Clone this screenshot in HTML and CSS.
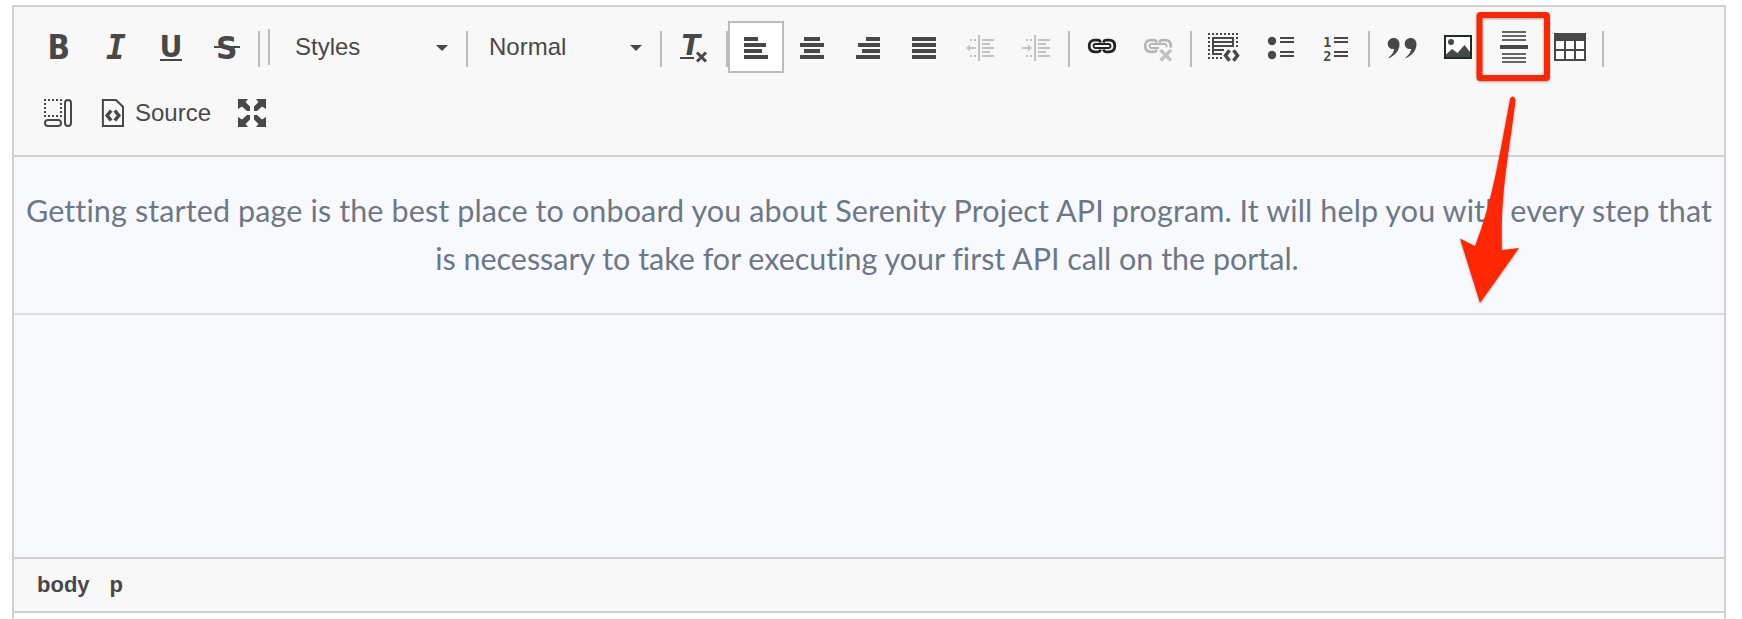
FILE: index.html
```html
<!DOCTYPE html>
<html lang="en">
<head>
<meta charset="utf-8">
<title>Editor</title>
<link rel="stylesheet" href="styles.css">
</head>
<body>
<main class="editor">
  <div class="toolbar">
    <div class="row">
      <button class="btn" aria-label="Bold"><svg class="ico" viewBox="0 0 32 32"><text class="bold" x="3.500" y="28" font-size="33" textLength="22.500" lengthAdjust="spacingAndGlyphs">B</text></svg></button>
      <button class="btn" aria-label="Italic"><svg class="ico" viewBox="0 0 32 32"><text class="mono" x="6" y="28" font-size="33">I</text></svg></button>
      <button class="btn" aria-label="Underline"><svg class="ico" viewBox="0 0 32 32"><text class="bold" x="3.500" y="25.500" font-size="30" textLength="23" lengthAdjust="spacingAndGlyphs">U</text><path d="M4 28h22v2H4z"/></svg></button>
      <button class="btn" aria-label="Strikethrough"><svg class="ico" viewBox="0 0 32 32"><text class="bold" x="4" y="27.500" font-size="32" textLength="21.500" lengthAdjust="spacingAndGlyphs">S</text><path d="M2 15h26v2H2z"/></svg></button>
      <i class="sep after-style"></i><i class="sep raised"></i>
      <button class="combo styles"><span>Styles</span><i class="caret"></i></button>
      <i class="sep"></i>
      <button class="combo format"><span>Normal</span><i class="caret"></i></button>
      <i class="sep"></i>
      <button class="btn clear" aria-label="Remove format"><svg class="ico" viewBox="0 0 32 32"><text class="oblique" x="5.500" y="24" font-size="27.500">T</text><path d="M4 26h14v2H4z"/><path d="M21 21.500l9 9m0-9l-9 9" class="line heavy"/></svg></button>
      <i class="sep"></i>
      <button class="btn on" aria-label="Align left"><svg class="ico" viewBox="0 0 32 32"><path d="M4 6h14v4H4zM4 12h22v4H4zM4 18h18v4H4zM4 24h24v4H4z"/></svg></button>
      <button class="btn" aria-label="Center"><svg class="ico" viewBox="0 0 32 32"><path d="M8 6h16v4H8zM4 12h24v4H4zM8 18h16v4H8zM4 24h24v4H4z"/></svg></button>
      <button class="btn" aria-label="Align right"><svg class="ico" viewBox="0 0 32 32"><path d="M14 6h14v4H14zM6 12h22v4H6zM10 18h18v4H10zM4 24h24v4H4z"/></svg></button>
      <button class="btn" aria-label="Justify"><svg class="ico" viewBox="0 0 32 32"><path d="M4 6h24v4H4zM4 12h24v4H4zM4 18h24v4H4zM4 24h24v4H4z"/></svg></button>
      <button class="btn off" aria-label="Decrease indent"><svg class="ico" viewBox="0 0 32 32"><path d="M14 4h2v26h-2zM18 8h12v2H18zM18 12h8v2h-8zM18 16h12v2H18zM18 20h8v2h-8zM18 24h12v2H18zM6 8h2v2H6zM10 8h2v2h-2zM6 24h2v2H6zM10 24h2v2h-2zM2 17l4-3.500V16h6v2H6v2.500z"/></svg></button>
      <button class="btn off" aria-label="Increase indent"><svg class="ico" viewBox="0 0 32 32"><path d="M14 4h2v26h-2zM18 8h12v2H18zM18 12h8v2h-8zM18 16h12v2H18zM18 20h8v2h-8zM18 24h12v2H18zM6 8h2v2H6zM10 8h2v2h-2zM6 24h2v2H6zM10 24h2v2h-2zM12 17l-4-3.500V16H2v2h6v2.500z"/></svg></button>
      <i class="sep gap"></i>
      <button class="btn" aria-label="Link"><svg class="ico" viewBox="0 0 32 32"><path class="chain" d="M14.500 11.500Q14 9.200 11.500 9.200H9Q3.200 9.200 3.200 15T9 20.800h2.500q2.500 0 3-2.300M17.500 11.500Q18 9.200 20.500 9.200H23q5.800 0 5.800 5.800T23 20.800h-2.500q-2.500 0-3-2.300"/><rect class="bar" x="7.500" y="13" width="17" height="4" rx="2"/></svg></button>
      <button class="btn off" aria-label="Unlink"><svg class="ico" viewBox="0 0 32 32"><path class="chain" d="M14.500 11.500Q14 9.200 11.500 9.200H9Q3.200 9.200 3.200 15T9 20.800h2.500q2.500 0 3-2.300M17.500 11.500Q18 9.200 20.500 9.200H23q5.800 0 5.800 5.800v1.500"/><path class="bar" d="M17 17H9.500q-2 0-2-2t2-2h13q2 0 2 2v1.500"/><path d="M18.500 19l10.500 10.500m0-10.500L18.500 29.500" class="line cross"/></svg></button>
      <i class="sep gap"></i>
      <button class="btn" aria-label="Templates"><svg class="ico" viewBox="0 0 32 32"><path class="line dots" d="M0 3h30M0 27h14M1 6v20M29 6v10"/><path d="M4 6h22v2H4zM4 10h22v2H4zM4 14h22v2H4zM4 18h12v2H4zM4 22h10v2H4zM4 6h2v18H4zM24 6h2v10h-2z"/><path class="line angle" d="M21.500 19.300L17.500 24.500l4 5.200M25.500 19.300l4 5.200-4 5.200"/></svg></button>
      <button class="btn" aria-label="Bulleted list"><svg class="ico" viewBox="0 0 32 32"><circle cx="8" cy="10" r="4.200"/><circle cx="8" cy="24" r="4.200"/><path d="M16 6h14v2H16zM16 10h14v2H16zM16 20h14v2H16zM16 24h14v2H16z"/></svg></button>
      <button class="btn" aria-label="Numbered list"><svg class="ico" viewBox="0 0 32 32"><text class="num" x="3.200" y="16" font-size="13.500">1</text><text class="num" x="3.200" y="30" font-size="13.500">2</text><path d="M14 6h14v2H14zM14 10h14v2H14zM14 20h14v2H14zM14 24h14v2H14z"/></svg></button>
      <i class="sep gap"></i>
      <button class="btn" aria-label="Quote"><svg class="ico" viewBox="0 0 32 32"><path d="M7.700 7c3.500 0 5.800 2.600 5.800 6.300 0 6-4.300 11.500-11 14v-.8c3-2.100 5.200-4.900 5.700-8.500-3.800.5-6.500-1.800-6.500-5.200C1.700 9.500 4.300 7 7.700 7zM24.700 7c3.500 0 5.800 2.600 5.800 6.300 0 6-4.300 11.500-11 14v-.8c3-2.100 5.200-4.900 5.700-8.500-3.800.5-6.500-1.800-6.500-5.200C18.700 9.500 21.300 7 24.700 7z"/></svg></button>
      <button class="btn" aria-label="Image"><svg class="ico" viewBox="0 0 32 32"><path class="dark" d="M2 4h28v24H2z"/><path class="white" d="M4 6h24v20H4z"/><circle cx="9" cy="11" r="3"/><path d="M4 26v-2.500L10 18l5.500 4 7-8L28 21v5z"/></svg></button>
      <button class="btn" aria-label="Horizontal line"><svg class="ico" viewBox="0 0 32 32"><path class="mid" d="M4 0h24v2H4zM4 4h24v2H4zM4 8h24v2H4zM4 22h24v2H4zM4 26h24v2H4zM4 30h24v2H4z"/><path d="M2 14h28v4H2z"/></svg></button>
      <button class="btn" aria-label="Table"><svg class="ico" viewBox="0 0 32 32"><path d="M0 2h32v28H0z"/><path class="white" d="M2 10h8v8H2zM12 10h8v8h-8zM22 10h8v8h-8zM2 20h8v8H2zM12 20h8v8h-8zM22 20h8v8h-8z"/></svg></button>
      <i class="sep gap"></i>
    </div>
    <div class="row second">
      <button class="btn" aria-label="Show blocks"><svg class="ico" viewBox="0 0 32 32"><path class="line dots" d="M2 3h18M2 19h18M3 6v12M19 6v12"/><rect class="line" x="3" y="23" width="16" height="6" rx="3"/><rect class="line" x="23" y="3" width="6" height="26" rx="3"/></svg></button>
      <button class="source"><svg class="ico" viewBox="0 0 32 32"><path class="line" d="M6.900 3h13L27 9.800V29H6.900z"/><path class="line angle" d="M15.200 13.500l-4 5 4 5M18.800 13.500l4 5-4 5"/></svg><span>Source</span></button>
      <button class="btn" aria-label="Maximize"><svg class="ico" viewBox="0 0 32 32"><path d="M2 2h10L9.500 5 14 9.500V14H11L6 9.500 2 12zM30 2v10l-4-2.500L21 14h-3V9.500L22.500 5 20 2zM2 30V20l4 2.500L11 18h3v4.500L9.500 27l2.500 3zM30 30H20l2.500-3L18 22.500V18h3l5 4.500 4-2.500z"/></svg></button>
    </div>
  </div>
  <section class="content">
    <p class="intro"><span class="l1">Getting started page is the best place to onboard you about Serenity Project API program. It will help you with every step that</span><br><span class="l2">is necessary to take for executing your first API call on the portal.</span></p>
    <hr class="rule">
  </section>
  <footer class="path"><span>body</span><span>p</span></footer>
</main>
<svg class="callout" viewBox="0 0 110 310">
  <rect x="19.500" y="15" width="67.500" height="63" rx="1" />
  <path d="M50 99Q51 96 53 96.500T55.500 100C51 142 40 190 42 250L59 248 20 303 0 238.500 15 246C33 200 40 152 50 99z"/>
</svg>
</body>
</html>
```
FILE: styles.css
```css
* { box-sizing: border-box; }
body { margin: 0; height: 619px; overflow: hidden; background: #fff; font-family: "Liberation Sans", Arial, sans-serif; }
.editor { width: 1714px; height: 640px; margin: 5px 0 0 12px; border: 2px solid #d1d1d1; }
.toolbar { height: 150px; padding: 14px 0 0 18px; background: #f8f8f8; border-bottom: 2px solid #d1d1d1; }
.row { display: flex; height: 52px; align-items: center; }
.second { margin: 14px 0 0 -2px; }
button { font: 24px "Liberation Sans", Arial, sans-serif; color: #484848; background: none; border: 0; padding: 0; margin: 0; }
.btn { width: 56px; height: 52px; flex: none; display: flex; align-items: center; justify-content: center; }
.on { background: #fff; border: 2px solid #bcbcbc; }
.off { opacity: .3; }
.ico { width: 32px; height: 32px; flex: none; overflow: visible; fill: #484848; }
.sep { flex: none; width: 2px; height: 36px; margin-top: 4px; background: #bcbcbc; }
.after-style { margin-left: 2px; }
.raised { margin: 0 0 0 8px; }
.gap { margin-left: 4px; margin-right: 4px; }
.combo { height: 52px; display: flex; align-items: center; justify-content: space-between; }
.styles { width: 196px; padding: 0 18px 0 25px; }
.format { width: 192px; padding: 0 18px 0 21px; }
.caret { border: 6px solid transparent; border-top-color: #484848; border-bottom: 0; margin-top: 2px; }
.clear { margin: 0 6px 0 2px; }
.source { height: 52px; display: flex; align-items: center; gap: 7px; padding: 0 13px 0 10px; width: 138px; }
.bold { font-family: "DejaVu Sans", sans-serif; font-weight: 700; }
.mono { font-family: "DejaVu Sans Mono", monospace; font-weight: 700; font-style: italic; }
.oblique { font-family: "DejaVu Sans", sans-serif; font-weight: 700; font-style: italic; }
.num { font-family: "DejaVu Sans Mono", monospace; font-weight: 700; }
.line { fill: none; stroke: #484848; stroke-width: 2; }
.heavy { stroke-width: 3; }
.cross { stroke-width: 3.5; }
.angle { stroke-width: 3.5; }
.dots { stroke-dasharray: 2 2; }
.white { fill: #fff; }
.dark { fill: #222b2b; }
.mid { fill: #666; }
.chain { fill: none; stroke: #222; stroke-width: 2.8; }
.bar { fill: none; stroke: #222; stroke-width: 1.8; }
.content { height: 400px; background: #f8f9fd; }
.intro { margin: 0; padding: 29px 4px 0 0; height: 156px; font: 30.5px/48px Lato, sans-serif; font-variant-ligatures: none; color: #6d7886; text-align: center; white-space: nowrap; }
.l1 { letter-spacing: .12px; margin-right: -4px; }
.l2 { letter-spacing: -.02px; }
.rule { margin: 0; border: 0; height: 2px; background: #dcdde3; }
.path { height: 56px; border: solid #d1d1d1; border-width: 2px 0; background: #f8f8f8; display: flex; align-items: center; gap: 20px; padding-left: 23px; font-weight: 700; font-size: 22px; color: #484848; }
.callout { position: absolute; left: 1460px; top: 0; width: 110px; height: 310px; fill: #ff2600; filter: drop-shadow(0 1px 1px rgba(0,0,0,.35)); }
.callout rect { fill: none; stroke: #ff2600; stroke-width: 6; stroke-linejoin: round; }
```
